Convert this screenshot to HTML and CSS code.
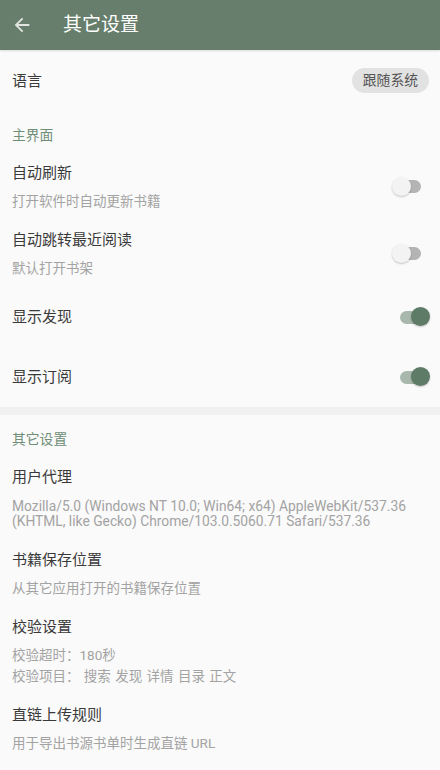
FILE: index.html
```html
<!DOCTYPE html>
<html lang="zh-CN">
<head>
<meta charset="utf-8">
<title>其它设置</title>
<link rel="stylesheet" href="styles.css">
</head>
<body>
<div class="screen">
  <header class="appbar">
    <span class="back">
      <svg viewBox="0 0 24 24" width="22" height="22"><path d="M20 11H7.83l5.59-5.59L12 4l-8 8 8 8 1.41-1.41L7.83 13H20v-2z" fill="currentColor"/></svg>
    </span>
    <span class="appbar-title">其它设置</span>
  </header>

  <div class="row lang">
    <div class="text"><div class="title">语言</div></div>
    <span class="chip">跟随系统</span>
  </div>

  <div class="category">主界面</div>

  <div class="row">
    <div class="text">
      <div class="title">自动刷新</div>
      <div class="summary">打开软件时自动更新书籍</div>
    </div>
    <span class="switch"><span class="track"></span><span class="knob"></span></span>
  </div>

  <div class="row">
    <div class="text">
      <div class="title">自动跳转最近阅读</div>
      <div class="summary">默认打开书架</div>
    </div>
    <span class="switch"><span class="track"></span><span class="knob"></span></span>
  </div>

  <div class="row single">
    <div class="text"><div class="title">显示发现</div></div>
    <span class="switch on"><span class="track"></span><span class="knob"></span></span>
  </div>

  <div class="row single">
    <div class="text"><div class="title">显示订阅</div></div>
    <span class="switch on"><span class="track"></span><span class="knob"></span></span>
  </div>

  <div class="band"></div>

  <div class="category second">其它设置</div>

  <div class="row">
    <div class="text">
      <div class="title">用户代理</div>
      <div class="summary latin">Mozilla/5.0 (Windows NT 10.0; Win64; x64) AppleWebKit/537.36 (KHTML, like Gecko) Chrome/103.0.5060.71 Safari/537.36</div>
    </div>
  </div>

  <div class="row">
    <div class="text">
      <div class="title">书籍保存位置</div>
      <div class="summary">从其它应用打开的书籍保存位置</div>
    </div>
  </div>

  <div class="row">
    <div class="text">
      <div class="title">校验设置</div>
      <div class="summary spaced">校验超时：180秒<br>校验项目： 搜索 发现 详情 目录 正文</div>
    </div>
  </div>

  <div class="row">
    <div class="text">
      <div class="title">直链上传规则</div>
      <div class="summary">用于导出书源书单时生成直链 URL</div>
    </div>
  </div>
</div>
</body>
</html>
```

FILE: styles.css
```css
* { box-sizing: border-box; }

html, body {
  margin: 0;
  padding: 0;
  background: #fafafa;
}

body {
  font-family: Roboto, "Noto Sans CJK SC", sans-serif;
  color: #3a3a3a;
}

.screen {
  width: 440px;
  min-height: 770px;
  background: #fafafa;
  overflow: hidden;
}

.appbar {
  height: 50px;
  background: #667e6b;
  display: flex;
  align-items: center;
  padding-left: 11px;
  box-shadow: 0 1px 2px rgba(0,0,0,0.12);
}

.back {
  width: 22px;
  height: 22px;
  display: flex;
  color: rgba(255,255,255,0.8);
}

.appbar-title {
  margin-left: 30px;
  font-size: 19px;
  color: #ffffff;
  line-height: 24px;
}

.row {
  display: flex;
  align-items: center;
  padding: 9px 10px 8.5px 12px;
}

.row.single {
  min-height: 60px;
}

.row.lang {
  height: 61px;
  padding-top: 0;
  padding-bottom: 0;
}

.text {
  flex: 1;
  min-width: 0;
}

.title {
  font-size: 15px;
  line-height: 22px;
  color: #3a3a3a;
}

.summary {
  font-size: 13.5px;
  line-height: 21px;
  color: #a3a3a3;
  margin-top: 6.5px;
}

.summary.spaced {
  word-spacing: 1px;
}

.summary.latin {
  font-size: 13.8px;
  line-height: 15px;
  margin-top: 10.5px;
  margin-bottom: 3px;
}

.chip {
  height: 25px;
  padding: 0 11px;
  border-radius: 13px;
  background: #e2e2e2;
  color: #555555;
  font-size: 13.8px;
  line-height: 25px;
  margin-right: 1px;
}

.category {
  padding: 16px 12px 9px;
  font-size: 13.8px;
  line-height: 17px;
  color: #6f8e77;
}

.band {
  height: 8px;
  background: #f1f1f1;
}

.switch {
  position: relative;
  width: 38px;
  height: 20px;
  flex: none;
}

.track {
  position: absolute;
  left: 5px;
  right: 9px;
  top: 3.5px;
  height: 13px;
  border-radius: 7px;
  background: #b4b4b4;
}

.knob {
  position: absolute;
  left: 0;
  top: 0;
  width: 19px;
  height: 19px;
  border-radius: 50%;
  background: #f3f3f3;
  box-shadow: 0 1px 2px rgba(0,0,0,0.22);
}

.switch.on .track {
  left: 8px;
  right: 6px;
  background: #a8b8ac;
}

.switch.on .knob {
  left: 19px;
  background: #5e7b67;
}
```
